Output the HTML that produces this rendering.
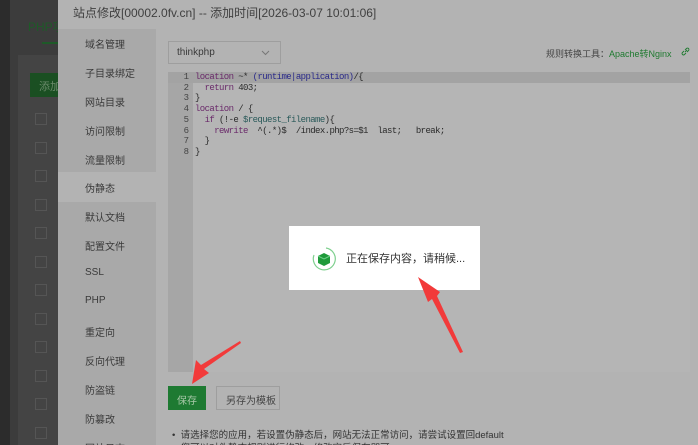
<!DOCTYPE html>
<html><head><meta charset="utf-8"><style>
*{margin:0;padding:0;box-sizing:border-box}
html,body{width:698px;height:445px;overflow:hidden}
body{background:#3c3c3c;font-family:"Liberation Sans","Noto Sans CJK SC",sans-serif;position:relative}
.abs{position:absolute}
.side .it{position:absolute;left:27px;font-size:10px;color:#3a3a3a;white-space:nowrap}
.code{font-family:"Liberation Mono",monospace;font-size:9px;letter-spacing:-0.6px;line-height:10.7px;white-space:pre;color:#2a2a2a}
.gut{font-family:"Liberation Mono",monospace;font-size:9px;line-height:10.7px;color:#444;text-align:right}
.k{color:#6a2a6a}.v{color:#2a5a5a}.b{color:#2a2a8a}
</style></head><body>
<div class="abs" style="left:0;top:0;width:10px;height:445px;background:#2c2c2c"></div>
<div class="abs" style="left:28px;top:18px;font-size:12px;color:#1e5a28;white-space:nowrap">PHP项</div>
<div class="abs" style="left:42px;top:42px;width:16px;height:2px;background:#1e5a28"></div>
<div class="abs" style="left:18px;top:55px;width:40px;height:390px;background:#444"></div>
<div class="abs" style="left:30px;top:73px;width:28px;height:24px;background:#1a4f22;color:#6a8a6a;font-size:11px;padding:5px 0 0 9px;white-space:nowrap;overflow:hidden">添加</div>
<div id="cb"></div>
<div class="abs" style="left:58px;top:0;width:640px;height:445px;background:#b3b3b3"></div>
<div class="abs" style="left:73px;top:4px;font-size:12px;color:#404040;white-space:nowrap">站点修改[00002.0fv.cn] -- 添加时间[2026-03-07 10:01:06]</div>
<div class="abs side" style="left:58px;top:29px;width:98px;height:416px;background:#a9a9a9">
<div class="abs" style="left:0;top:143px;width:98px;height:30px;background:#b3b3b3"></div>
<div class="it" style="top:7px">域名管理</div><div class="it" style="top:36px">子目录绑定</div><div class="it" style="top:65px">网站目录</div><div class="it" style="top:94px">访问限制</div><div class="it" style="top:123px">流量限制</div><div class="it" style="top:151px">伪静态</div><div class="it" style="top:180px">默认文档</div><div class="it" style="top:209px">配置文件</div><div class="it" style="top:238px">SSL</div><div class="it" style="top:266px">PHP</div><div class="it" style="top:295px">重定向</div><div class="it" style="top:324px">反向代理</div><div class="it" style="top:353px">防盗链</div><div class="it" style="top:382px">防篡改</div><div class="it" style="top:411px">网站日志</div>
</div>
<div class="abs" style="left:168px;top:41px;width:113px;height:23px;border:1px solid #9e9e9e;font-size:10px;color:#3a3a3a;padding:5px 0 0 8px">thinkphp<svg style="position:absolute;right:10px;top:8px" width="9" height="6"><path d="M1 1 L4.5 4.5 L8 1" fill="none" stroke="#777" stroke-width="1"/></svg></div>
<div class="abs" style="left:546px;top:47px;font-size:9px;color:#444;white-space:nowrap">规则转换工具：<span style="color:#1f7a30">Apache转Nginx</span></div>
<svg class="abs" style="left:681px;top:47px" width="9" height="9"><path d="M4 5 L6 3 M3 4 L1.5 5.5 A1.4 1.4 0 0 0 3.5 7.5 L5 6 M6 5 L7.5 3.5 A1.4 1.4 0 0 0 5.5 1.5 L4 3" fill="none" stroke="#1f7a30" stroke-width="0.9"/></svg>
<div class="abs" style="left:168px;top:72px;width:522px;height:300px;background:#b5b5b5"></div>
<div class="abs" style="left:168px;top:72px;width:25px;height:300px;background:#a6a6a6"></div>
<div class="abs" style="left:168px;top:72px;width:522px;height:11px;background:#a3a3a3"></div>
<div class="abs gut" style="left:168px;top:72px;width:21px">1<br>2<br>3<br>4<br>5<br>6<br>7<br>8</div>
<div class="abs code" style="left:195px;top:72px"><span class="k">location</span> ~* <span class="b">(runtime|application)</span>/{
  <span class="k">return</span> 403;
}
<span class="k">location</span> / {
  <span class="k">if</span> (!-e <span class="v">$request_filename</span>){
    <span class="k">rewrite</span>  ^(.*)$  /index.php?s=$1  last;   break;
  }
}</div>
<div class="abs" style="left:168px;top:386px;width:38px;height:24px;background:#1e7a32;color:#a8c8a8;font-size:10px;padding:6px 0 0 9px">保存</div>
<div class="abs" style="left:216px;top:386px;width:64px;height:24px;border:1px solid #9e9e9e;color:#444;font-size:10px;padding:5px 0 0 9px;white-space:nowrap">另存为模板</div>
<div class="abs" style="left:172px;top:427px;font-size:9.5px;color:#333;white-space:nowrap">•&nbsp;&nbsp;请选择您的应用，若设置伪静态后，网站无法正常访问，请尝试设置回default</div>
<div class="abs" style="left:172px;top:440px;font-size:9.5px;color:#333;white-space:nowrap">•&nbsp;&nbsp;您可以对伪静态规则进行修改，修改完后保存即可。</div>
<div class="abs" style="left:289px;top:226px;width:191px;height:64px;background:#fff"></div>
<svg class="abs" style="left:311px;top:246px" width="26" height="26" viewBox="0 0 26 26"><path d="M15 2 A11 11 0 1 1 3 9" fill="none" stroke="#7fd08f" stroke-width="1.2"/><path d="M7 10 L13 7 L19 10 L19 17 L13 20 L7 17Z" fill="#1f9a3a"/><path d="M7 10 L13 13 L19 10" fill="none" stroke="#6fd08a" stroke-width="1"/></svg>
<div class="abs" style="left:346px;top:250px;font-size:11px;color:#333;white-space:nowrap">正在保存内容，请稍候...</div>
<svg class="abs" style="left:0;top:0" width="698" height="445"><polygon points="418,277 440,292 437,296 463,352 460,353 432,299 428,302" fill="#f23a3a"/><polygon points="192,384 196,360 201,365 240,341 241,343 204,369 209,373" fill="#f23a3a"/></svg>
<script>
var h='';for(var i=0;i<12;i++){h+='<div class="abs" style="left:35px;top:'+(113+i*28.5)+'px;width:12px;height:12px;border:1px solid #555"></div>';}
document.getElementById('cb').innerHTML=h;
</script>
</body></html>
